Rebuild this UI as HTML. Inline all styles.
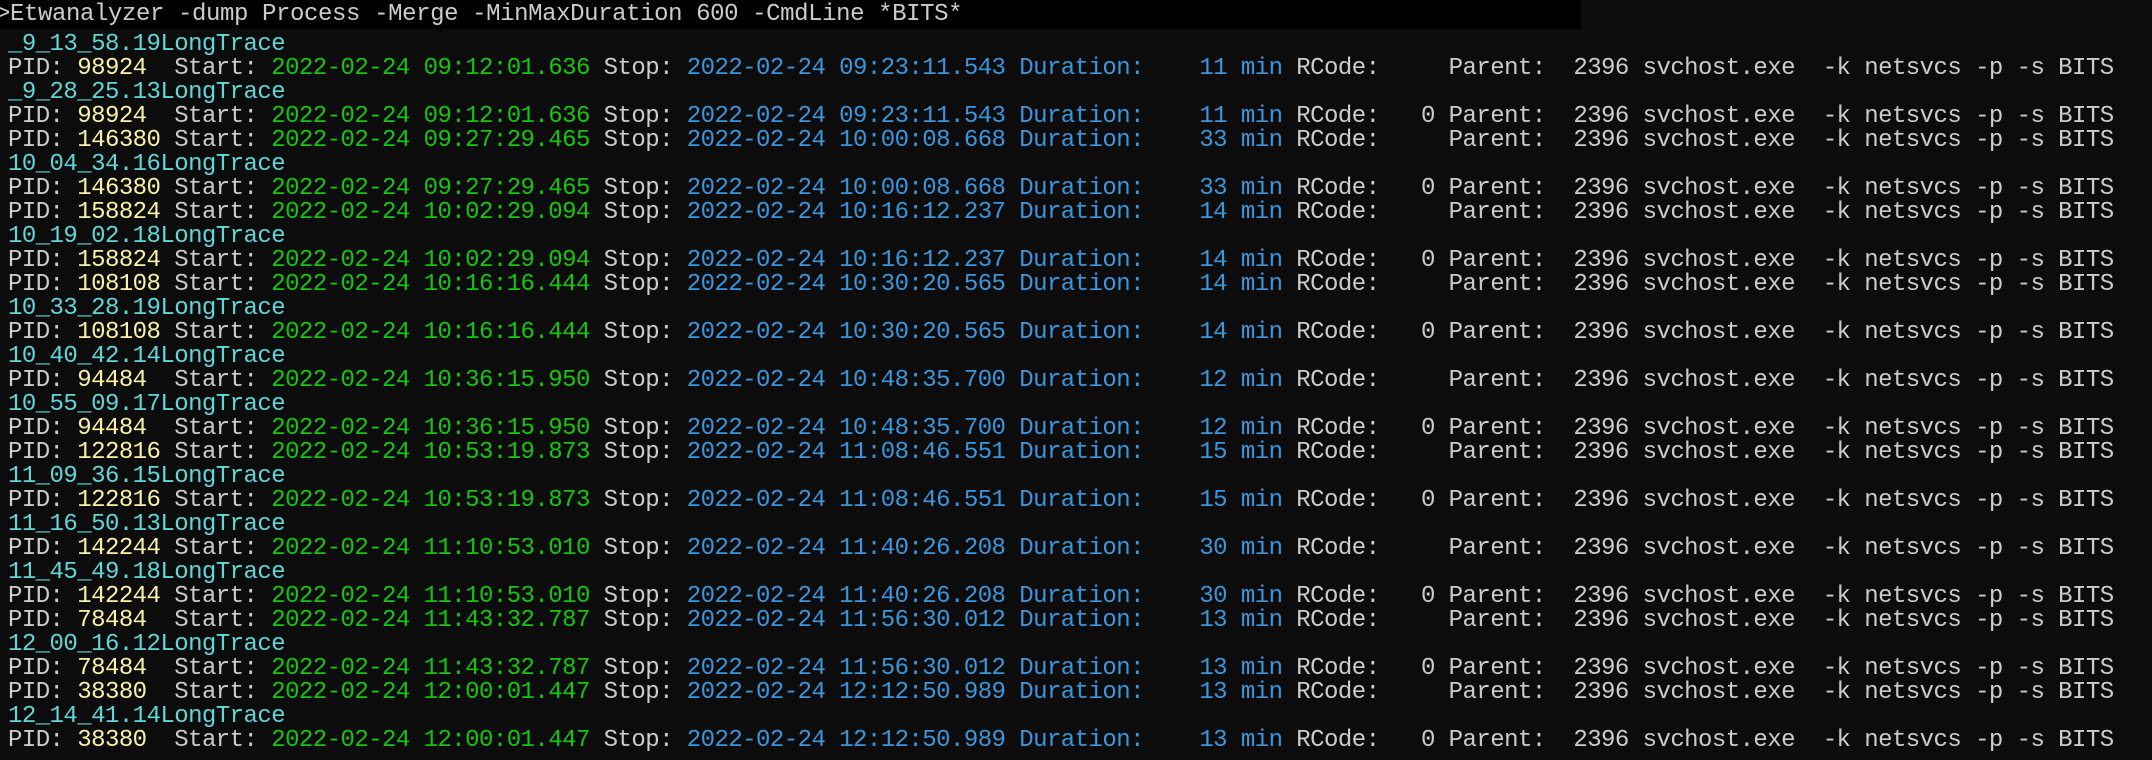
<!DOCTYPE html>
<html><head><meta charset="utf-8"><style>
html,body{margin:0;padding:0;background:#0c0c0c;width:2152px;height:760px;overflow:hidden}
pre{margin:0;font-family:"Liberation Mono",monospace;font-size:24px;letter-spacing:-0.55px;line-height:24px;color:#cccccc;position:absolute;left:8px;top:33px;white-space:pre}
.cmd{position:absolute;left:0;top:0;width:1581px;height:29px;background:#000}
.cmd pre{position:absolute;left:-4px;top:2px;line-height:26px;letter-spacing:-0.4px}
.t{color:#61d6d6}.y{color:#f9f1a5}.g{color:#16c60c}.b{color:#3a96dd}
</style></head><body>
<div class="cmd"><pre>&gt;Etwanalyzer -dump Process -Merge -MinMaxDuration 600 -CmdLine *BITS*</pre></div>
<pre><span class="t">_9_13_58.19LongTrace</span>
PID: <span class="y">98924 </span> Start: <span class="g">2022-02-24 09:12:01.636</span> Stop: <span class="b">2022-02-24 09:23:11.543 Duration:    11 min</span> RCode:     Parent:  2396 svchost.exe  -k netsvcs -p -s BITS
<span class="t">_9_28_25.13LongTrace</span>
PID: <span class="y">98924 </span> Start: <span class="g">2022-02-24 09:12:01.636</span> Stop: <span class="b">2022-02-24 09:23:11.543 Duration:    11 min</span> RCode:   0 Parent:  2396 svchost.exe  -k netsvcs -p -s BITS
PID: <span class="y">146380</span> Start: <span class="g">2022-02-24 09:27:29.465</span> Stop: <span class="b">2022-02-24 10:00:08.668 Duration:    33 min</span> RCode:     Parent:  2396 svchost.exe  -k netsvcs -p -s BITS
<span class="t">10_04_34.16LongTrace</span>
PID: <span class="y">146380</span> Start: <span class="g">2022-02-24 09:27:29.465</span> Stop: <span class="b">2022-02-24 10:00:08.668 Duration:    33 min</span> RCode:   0 Parent:  2396 svchost.exe  -k netsvcs -p -s BITS
PID: <span class="y">158824</span> Start: <span class="g">2022-02-24 10:02:29.094</span> Stop: <span class="b">2022-02-24 10:16:12.237 Duration:    14 min</span> RCode:     Parent:  2396 svchost.exe  -k netsvcs -p -s BITS
<span class="t">10_19_02.18LongTrace</span>
PID: <span class="y">158824</span> Start: <span class="g">2022-02-24 10:02:29.094</span> Stop: <span class="b">2022-02-24 10:16:12.237 Duration:    14 min</span> RCode:   0 Parent:  2396 svchost.exe  -k netsvcs -p -s BITS
PID: <span class="y">108108</span> Start: <span class="g">2022-02-24 10:16:16.444</span> Stop: <span class="b">2022-02-24 10:30:20.565 Duration:    14 min</span> RCode:     Parent:  2396 svchost.exe  -k netsvcs -p -s BITS
<span class="t">10_33_28.19LongTrace</span>
PID: <span class="y">108108</span> Start: <span class="g">2022-02-24 10:16:16.444</span> Stop: <span class="b">2022-02-24 10:30:20.565 Duration:    14 min</span> RCode:   0 Parent:  2396 svchost.exe  -k netsvcs -p -s BITS
<span class="t">10_40_42.14LongTrace</span>
PID: <span class="y">94484 </span> Start: <span class="g">2022-02-24 10:36:15.950</span> Stop: <span class="b">2022-02-24 10:48:35.700 Duration:    12 min</span> RCode:     Parent:  2396 svchost.exe  -k netsvcs -p -s BITS
<span class="t">10_55_09.17LongTrace</span>
PID: <span class="y">94484 </span> Start: <span class="g">2022-02-24 10:36:15.950</span> Stop: <span class="b">2022-02-24 10:48:35.700 Duration:    12 min</span> RCode:   0 Parent:  2396 svchost.exe  -k netsvcs -p -s BITS
PID: <span class="y">122816</span> Start: <span class="g">2022-02-24 10:53:19.873</span> Stop: <span class="b">2022-02-24 11:08:46.551 Duration:    15 min</span> RCode:     Parent:  2396 svchost.exe  -k netsvcs -p -s BITS
<span class="t">11_09_36.15LongTrace</span>
PID: <span class="y">122816</span> Start: <span class="g">2022-02-24 10:53:19.873</span> Stop: <span class="b">2022-02-24 11:08:46.551 Duration:    15 min</span> RCode:   0 Parent:  2396 svchost.exe  -k netsvcs -p -s BITS
<span class="t">11_16_50.13LongTrace</span>
PID: <span class="y">142244</span> Start: <span class="g">2022-02-24 11:10:53.010</span> Stop: <span class="b">2022-02-24 11:40:26.208 Duration:    30 min</span> RCode:     Parent:  2396 svchost.exe  -k netsvcs -p -s BITS
<span class="t">11_45_49.18LongTrace</span>
PID: <span class="y">142244</span> Start: <span class="g">2022-02-24 11:10:53.010</span> Stop: <span class="b">2022-02-24 11:40:26.208 Duration:    30 min</span> RCode:   0 Parent:  2396 svchost.exe  -k netsvcs -p -s BITS
PID: <span class="y">78484 </span> Start: <span class="g">2022-02-24 11:43:32.787</span> Stop: <span class="b">2022-02-24 11:56:30.012 Duration:    13 min</span> RCode:     Parent:  2396 svchost.exe  -k netsvcs -p -s BITS
<span class="t">12_00_16.12LongTrace</span>
PID: <span class="y">78484 </span> Start: <span class="g">2022-02-24 11:43:32.787</span> Stop: <span class="b">2022-02-24 11:56:30.012 Duration:    13 min</span> RCode:   0 Parent:  2396 svchost.exe  -k netsvcs -p -s BITS
PID: <span class="y">38380 </span> Start: <span class="g">2022-02-24 12:00:01.447</span> Stop: <span class="b">2022-02-24 12:12:50.989 Duration:    13 min</span> RCode:     Parent:  2396 svchost.exe  -k netsvcs -p -s BITS
<span class="t">12_14_41.14LongTrace</span>
PID: <span class="y">38380 </span> Start: <span class="g">2022-02-24 12:00:01.447</span> Stop: <span class="b">2022-02-24 12:12:50.989 Duration:    13 min</span> RCode:   0 Parent:  2396 svchost.exe  -k netsvcs -p -s BITS</pre>
</body></html>
